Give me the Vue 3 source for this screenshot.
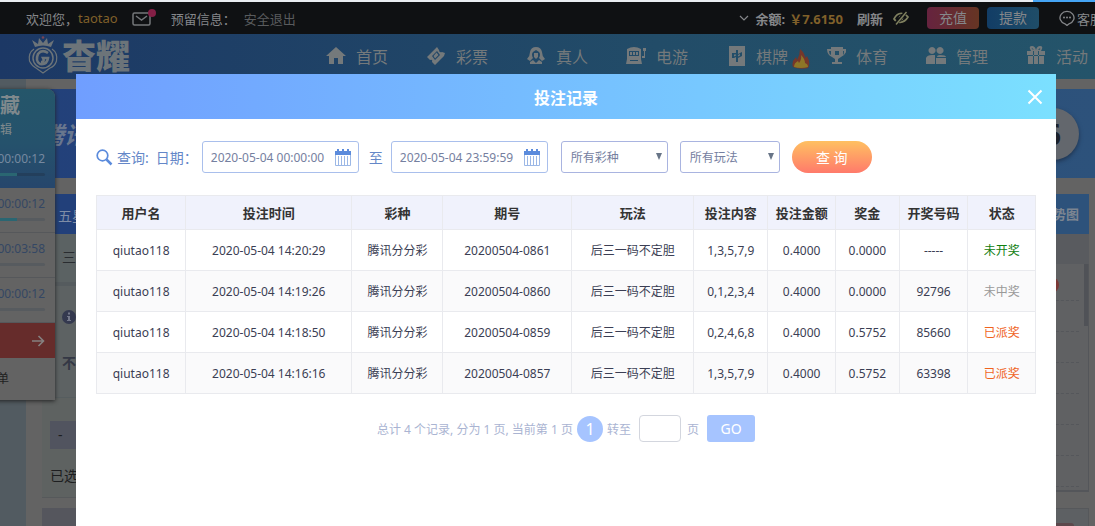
<template>
  <div class="page">
    <div class="strip"><span></span></div>

    <header class="topbar">
      <span>欢迎您，</span>
      <span class="user">taotao</span>
      <button class="mail" aria-label="mail">
        <svg width="25" height="18" viewBox="0 0 25 18">
          <rect x="1" y="4" width="17" height="12" rx="1.5" fill="none" stroke="#74777a" stroke-width="1.5" />
          <path d="M4 7l5.500 4 5.500-4" fill="none" stroke="#74777a" stroke-width="1.500" />
          <circle cx="20" cy="4" r="4" fill="#841f46" />
        </svg>
      </button>
      <span class="reserved">预留信息：</span>
      <a class="logout" href="#">安全退出</a>
      <div class="account">
        <svg width="10" height="6" viewBox="0 0 10 6"><path d="M1 1l4 4 4-4" fill="none" stroke="#85878a" stroke-width="1.2" /></svg>
        <b class="balance">余额:</b>
        <b class="money">￥7.6150</b>
        <button class="refresh">刷新</button>
        <svg class="eye" width="16" height="14" viewBox="0 0 16 14">
          <path d="M1 8Q4 2 9 2.500Q13 3 15 6Q12 11 7 11.500Q3 11 1 8Z" fill="none" stroke="#7f805f" stroke-width="1.700" />
          <circle cx="8" cy="7" r="2.400" fill="#7f805f" />
          <path d="M2.500 13L13 1" stroke="#0f1113" stroke-width="3.500" />
          <path d="M3 13.500L13.500 1" stroke="#7f805f" stroke-width="1.500" />
        </svg>
        <button class="pill pay">充值</button>
        <button class="pill draw">提款</button>
        <svg class="chat" width="16" height="16" viewBox="0 0 16 16">
          <path d="M6 13.800A7 6.300 0 1 1 10 13.800L8 15.500Z" fill="none" stroke="#85878a" stroke-width="1.300" />
          <g fill="#85878a"><circle cx="5" cy="7.500" r="1" /><circle cx="8" cy="7.500" r="1" /><circle cx="11" cy="7.500" r="1" /></g>
        </svg>
        <a class="service" href="#">客服</a>
      </div>
    </header>

    <nav class="nav">
      <div class="logo">
        <svg width="32" height="40" viewBox="0 0 32 40" fill="none" stroke="#6c7479">
          <path d="M8 11L5 4l6 4 1-6 4 5 4-5 1 6 6-4-3 7Q16 8 8 11Z" fill="#6c7479" stroke="none" />
          <circle cx="16" cy="1.500" r="1.300" fill="#7b4552" stroke="none" />
          <path d="M7 13Q1 17 2.500 25Q5 30 9 32L16 37L23 32Q28 30 29.500 25Q31 17 25 13" stroke-width="1.200" />
          <circle cx="16" cy="22" r="10" stroke-width="1.500" />
          <path d="M21 17Q15 13 11 18Q8 25 13 28Q20 29 21 22H16Q18 26 14 26" stroke-width="2.600" />
        </svg>
        <span>杳耀</span>
      </div>
      <a v-for="item in menus" :key="item.name" class="nav-item" href="#">
        <svg width="20" height="20" viewBox="0 0 20 20"><path :d="item.icon" fill="#74797b" fill-rule="evenodd" /></svg>
        <span>{{ item.name }}</span>
        <svg v-if="item.hot" class="fire" width="18" height="20" viewBox="0 0 18 20">
          <path d="M1 18Q-1 13 4 8L5 11Q8 6 8 0Q13 4 13 9L15 7Q19 14 16 19Q8 21 1 18Z" fill="#76372a" />
          <path d="M2 18Q2 14 6 12L7 14Q10 10 9 6Q13 10 13 14Q16 15 16 18Q9 20 2 18Z" fill="#8d7627" />
        </svg>
      </a>
    </nav>

    <main class="content">
      <section class="banner">
        <span class="game">腾讯</span>
        <span class="ball">6</span>
      </section>
      <div class="columns">
        <section class="play">
          <div class="tabs">五星</div>
          <div class="modes">三</div>
          <div class="info">
            <svg width="14" height="14" viewBox="0 0 14 14">
              <circle cx="7" cy="7" r="7" fill="#34394f" />
              <path d="M6 2.500h2v2H6zM5 6h3v4h1v1H5v-1h1V7H5z" fill="#74788a" />
            </svg>
            <b>不</b>
          </div>
          <div class="bet">
            <div class="minus">-</div>
            <div>已选</div>
          </div>
          <div class="next"></div>
        </section>
        <aside class="trend">
          <div class="trend-head">走势图</div>
          <div class="trend-sub"></div>
          <div class="trend-list">
            <div v-for="n in 7" :key="n" class="trend-row"><i v-if="n === 1"></i></div>
          </div>
          <div class="trend-next"><span></span></div>
        </aside>
      </div>
    </main>

    <aside class="favorite">
      <div class="fav-head">
        <b>收藏</b>
        <span>编辑</span>
      </div>
      <div v-for="(f, i) in favorites" :key="i" class="fav-item">
        <span>{{ f.time }}</span>
        <div class="progress"><div :style="{ width: f.done + '%' }"></div></div>
      </div>
      <div class="fav-go">
        <svg width="13" height="12" viewBox="0 0 13 12"><path d="M0 6h11M6.500 1L11.500 6L6.500 11" fill="none" stroke="#858080" stroke-width="1.600" /></svg>
      </div>
      <div class="fav-foot">清单</div>
    </aside>

    <div class="dialog" role="dialog" aria-labelledby="title">
      <div class="dialog-head">
        <h1 id="title">投注记录</h1>
        <button class="close" aria-label="close" type="button">
          <svg width="16" height="16" viewBox="0 0 16 16"><path d="M1.500 1.500l13 13M14.500 1.500l-13 13" stroke="#fff" stroke-width="2" /></svg>
        </button>
      </div>

      <form class="query" @submit.prevent>
        <svg class="search" width="17" height="17" viewBox="0 0 17 17">
          <circle cx="6.500" cy="6.500" r="5.300" fill="none" stroke="#5b8bdc" stroke-width="1.700" />
          <path d="M10.500 10.500L15.500 15.500" stroke="#5b8bdc" stroke-width="2.500" />
        </svg>
        <span class="query-name">查询:</span>
        <label class="label" for="start">日期：</label>
        <div class="date">
          <input id="start" v-model="start" type="text" />
          <svg width="16" height="17" viewBox="0 0 16 17"><path :d="calendarTop" fill="#5b8bdc" /><path :d="calendarGrid" fill="none" stroke="#9cb8e6" /></svg>
        </div>
        <label class="to" for="end">至</label>
        <div class="date">
          <input id="end" v-model="end" type="text" />
          <svg width="16" height="17" viewBox="0 0 16 17"><path :d="calendarTop" fill="#5b8bdc" /><path :d="calendarGrid" fill="none" stroke="#9cb8e6" /></svg>
        </div>
        <div class="select lottery">
          <select v-model="lottery" aria-label="彩种"><option>所有彩种</option></select>
        </div>
        <div class="select method">
          <select v-model="method" aria-label="玩法"><option>所有玩法</option></select>
        </div>
        <button class="submit" type="submit">查 询</button>
      </form>

      <table class="records">
        <colgroup>
          <col v-for="c in columns" :key="c.title" :style="{ width: c.width + '%' }" />
        </colgroup>
        <thead>
          <tr><th v-for="c in columns" :key="c.title">{{ c.title }}</th></tr>
        </thead>
        <tbody>
          <tr v-for="r in records" :key="r.issue">
            <td>qiutao118</td>
            <td>{{ r.time }}</td>
            <td>腾讯分分彩</td>
            <td>{{ r.issue }}</td>
            <td>后三一码不定胆</td>
            <td>{{ r.content }}</td>
            <td>0.4000</td>
            <td>{{ r.bonus }}</td>
            <td>{{ r.code }}</td>
            <td :class="r.state">{{ states[r.state] }}</td>
          </tr>
        </tbody>
      </table>

      <div class="pager">
        <span>总计 4 个记录, 分为 1 页, 当前第 1 页</span>
        <button class="current" type="button">1</button>
        <label for="page">转至</label>
        <input id="page" v-model="page" type="text" />
        <span class="unit">页</span>
        <button class="go" type="button">GO</button>
      </div>
    </div>
  </div>
</template>

<script setup>
import { ref } from 'vue'

const start = ref('2020-05-04 00:00:00')
const end = ref('2020-05-04 23:59:59')
const lottery = ref('所有彩种')
const method = ref('所有玩法')
const page = ref('')

const calendarTop = 'M0 2h2V0h2v2h3V0h2v2h3V0h2v2h2v4H0z'
const calendarGrid = 'M.5 6v10.500h15V6M3.500 7v9M6.500 7v9M9.500 7v9M12.500 7v9'

const menus = [
  { name: '首页', icon: 'M10 1L20 10H17V18H12V12H8V18H3V10H0Z' },
  { name: '彩票', icon: 'M11 1L13 4Q13 7 16 6L19 7L18 10L9 19L6 16Q7 13 4 14L1 11ZM11 5L6 10L9 14L14 9ZM10.500 6.500L12.500 9L9 12.500L7.500 10Z' },
  { name: '真人', icon: 'M10 1Q15 1 16 6Q16 10 19 13L16 15L13 12Q15 8 13 6L10 4L7 6Q5 8 7 12L4 15L1 13Q4 10 4 6Q5 1 10 1ZM8 7h4v4l-2 2-2-2ZM4 16L7 14L10 17L13 14L16 16V18H4Z' },
  { name: '电游', icon: 'M1 3Q8-1 15 3V13L16 18H0L1 13ZM3 5V10H13V5ZM4 6h2v3H4ZM7 6h2v3H7ZM10 6h2v3h-2ZM4 14V15H12V14ZM16 10h2V5h-1V2h3v3h-1v7h-3Z' },
  { name: '棋牌', hot: true, icon: 'M3 0H19V20H3ZM10 4V7H6V12H8L10 11V16H12V12L16 10V6L12 8V4ZM8 8.500H10V9.500L8 10.500ZM12 9L14 8V9.500L12 10.500Z' },
  { name: '体育', icon: 'M5 1H17V3H21Q20 9 15 11L12 13V16H16V18H6V16H9V13L6 11Q1 9 1 3H5ZM3 5Q3 8 5 9V5ZM18 5H17V9Q18 8 18 5ZM9 5v4h4V5Z' },
  { name: '管理', icon: 'M6 1a3.500 3.500 0 1 0 .1 0ZM14 1a3.500 3.500 0 1 0 .1 0ZM0 18V12Q1 9 6 9H9V18ZM10 18V12H20V18ZM11 11Q11 9 14 9Q20 9 20 11Z' },
  { name: '活动', icon: 'M1 5H5Q2 0 6 0Q9 0 10 4Q11 0 14 0Q18 0 15 5H19V9H1ZM6 2Q5 3 8 4ZM14 2L12 4Q15 4 14 2ZM2 10H18V18H2ZM7 5H8V18H7ZM12 5H13V18H12Z' }
]

const favorites = [
  { time: '00:00:12', done: 79 },
  { time: '00:00:12', done: 79 },
  { time: '00:03:58', done: 0 },
  { time: '00:00:12', done: 0 }
]

const columns = [
  { title: '用户名', width: 9.5 },
  { title: '投注时间', width: 17.7 },
  { title: '彩种', width: 9.7 },
  { title: '期号', width: 13.7 },
  { title: '玩法', width: 13 },
  { title: '投注内容', width: 7.9 },
  { title: '投注金额', width: 7.2 },
  { title: '奖金', width: 6.8 },
  { title: '开奖号码', width: 7.3 },
  { title: '状态', width: 7.2 }
]

const states = { wait: '未开奖', lose: '未中奖', win: '已派奖' }

const records = [
  { time: '2020-05-04 14:20:29', issue: '20200504-0861', content: '1,3,5,7,9', bonus: '0.0000', code: '-----', state: 'wait' },
  { time: '2020-05-04 14:19:26', issue: '20200504-0860', content: '0,1,2,3,4', bonus: '0.0000', code: '92796', state: 'lose' },
  { time: '2020-05-04 14:18:50', issue: '20200504-0859', content: '0,2,4,6,8', bonus: '0.5752', code: '85660', state: 'win' },
  { time: '2020-05-04 14:16:16', issue: '20200504-0857', content: '1,3,5,7,9', bonus: '0.5752', code: '63398', state: 'win' }
]
</script>

<style>
body {
  margin: 0;
}
</style>

<style scoped>
.page {
  position: relative;
  height: 100vh;
  overflow: hidden;
  background: #636363;
  font-family: "Noto Sans", "Noto Sans CJK SC", sans-serif;
  font-size: 13px;
  color: #85878a;
}

.page * {
  box-sizing: border-box;
}

button {
  border: none;
  padding: 0;
  background: none;
  font-family: inherit;
  font-size: inherit;
  color: inherit;
  cursor: pointer;
}

input,
select {
  font-family: inherit;
}

a {
  color: inherit;
  text-decoration: none;
}

svg {
  display: block;
  flex: none;
}

.strip {
  display: flex;
  justify-content: flex-end;
  height: 2px;
  background: #e9edf1;
}

.strip span {
  width: 62px;
  background: #45a5f5;
}

/* top bar */
.topbar {
  display: flex;
  align-items: center;
  height: 32px;
  padding-left: 26px;
  background: #0f1113;
  white-space: nowrap;
}

.user {
  color: #80602a;
}

.mail {
  margin-left: 14px;
}

.reserved {
  margin-left: 14px;
}

.logout {
  margin-left: 8px;
  color: #595b5d;
}

.account {
  display: flex;
  align-items: center;
  margin-left: auto;
  margin-right: -8px;
}

.balance {
  margin-left: 6px;
}

.money {
  margin-left: 4px;
  color: #80602a;
}

.refresh {
  margin-left: 14px;
  font-weight: bold;
}

.eye {
  margin-left: 10px;
}

.pill {
  width: 52px;
  height: 22px;
  margin-left: 8px;
  border-radius: 4px;
  font-size: 14px;
  line-height: 22px;
}

.pay {
  margin-left: 18px;
  background: linear-gradient(90deg, #66233f, #663523);
}

.draw {
  background: linear-gradient(90deg, #123d66, #1f4d68);
}

.chat {
  margin-left: 20px;
}

.service {
  margin-left: 2px;
}

/* navigation */
.nav {
  display: flex;
  align-items: center;
  height: 45px;
  padding: 0 0 2px 27px;
  background: linear-gradient(90deg, #1c3865, #224c68 60%, #24546a);
  font-size: 16px;
  color: #74797b;
}

.logo {
  display: flex;
  flex: none;
  align-items: center;
  gap: 3px;
  width: 299px;
  font-size: 34px;
  font-weight: 900;
  line-height: 40px;
  color: #6c7479;
}

.nav-item {
  display: flex;
  flex: none;
  align-items: center;
  gap: 10px;
  width: 100px;
}

.fire {
  margin-left: -6px;
  margin-right: -12px;
  margin-top: 6px;
}

/* betting page */
.content {
  padding-top: 10px;
  background: linear-gradient(90deg, #525b61 26px, #636363 26px);
}

.banner {
  display: flex;
  align-items: center;
  justify-content: space-between;
  height: 89px;
  padding: 0 16px 0 40px;
  background: linear-gradient(90deg, #22407a, #2d527b);
}

.game {
  font-size: 24px;
  font-weight: bold;
  font-style: italic;
  color: #69778e;
}

.ball {
  width: 52px;
  height: 52px;
  border-radius: 50%;
  background: #63676d;
  box-shadow: 0 2px 4px #1f3450;
  font-size: 28px;
  font-weight: bold;
  line-height: 52px;
  text-align: center;
  color: #1d222b;
}

.columns {
  display: grid;
  grid-template-columns: 1fr 240px;
  gap: 16px;
  margin: 16px 6px 0 42px;
}

.tabs {
  height: 40px;
  padding-left: 16px;
  background: #22407a;
  font-size: 14px;
  line-height: 44px;
  color: #7f8da6;
}

.modes {
  height: 52px;
  padding-left: 20px;
  border-bottom: 4px solid #555b5e;
  background: #5b6263;
  font-size: 14px;
  line-height: 46px;
  color: #292c30;
}

.info {
  display: flex;
  flex-direction: column;
  gap: 28px;
  height: 112px;
  padding: 24px 20px 0;
  border-bottom: 1px solid #565d5f;
  background: #5d6263;
  font-size: 14px;
  color: #343845;
}

.bet {
  height: 100px;
  padding: 23px 8px 0;
  border-bottom: 1px solid #56595b;
  background: #5e6261;
  font-size: 14px;
  color: #1d1e20;
}

.minus {
  height: 28px;
  margin-bottom: 16px;
  padding-left: 8px;
  background: #51545f;
  line-height: 28px;
}

.next {
  height: 60px;
  margin-top: 10px;
  background: #55565d;
}

.trend-head {
  height: 40px;
  padding-right: 10px;
  background: #2d527b;
  font-weight: bold;
  line-height: 40px;
  text-align: right;
  color: #7c8591;
}

.trend-sub {
  height: 30px;
  background: #595b5f;
}

.trend-list {
  height: 228px;
  padding: 6px 9px 0;
  border: solid #54565a;
  border-width: 0 1px 2px;
  background: linear-gradient(#505257, #505257) right top / 4px 62px no-repeat #606163;
}

.trend-row {
  display: flex;
  justify-content: flex-end;
  height: 31px;
  padding: 7px 20px 0;
  border-bottom: 1px dashed #55575b;
}

.trend-row i {
  width: 16px;
  height: 16px;
  border-radius: 50%;
  background: #7b3836;
}

.trend-next {
  height: 60px;
  margin-top: 16px;
  padding: 14px;
  border: 1px solid #56585b;
  background: #5d6063;
}

.trend-next span {
  display: block;
  height: 20px;
  border-radius: 3px;
  background: #5c484c;
}

/* favourites drawer */
.favorite {
  position: absolute;
  top: 89px;
  left: -100px;
  width: 155px;
  border-radius: 0 8px 0 0;
  background: #636363;
  box-shadow: 0 1px 4px #222;
  text-align: right;
}

.fav-head {
  display: flex;
  flex-direction: column;
  height: 54px;
  padding: 4px 35px 0 0;
  border-radius: 0 8px 0 0;
  background: linear-gradient(#25566a, #25526c);
  color: #7f898d;
}

.fav-head b {
  font-size: 20px;
  line-height: 26px;
}

.fav-head span {
  padding-right: 8px;
  font-size: 12px;
  line-height: 22px;
}

.fav-item {
  height: 45px;
  padding: 6px 10px 0;
  border-bottom: 1px solid #56585b;
  font-size: 12px;
  line-height: 20px;
  color: #344764;
}

.fav-head + .fav-item {
  border-bottom: none;
  background: linear-gradient(#25526c, #26466c);
  color: #7689a0;
}

.progress {
  height: 3px;
  margin-top: 4px;
  border-radius: 2px;
  background: #575b5f;
}

.fav-head + .fav-item .progress {
  background: #233f5c;
}

.progress div {
  height: 3px;
  background: #2a6672;
}

.fav-go {
  display: flex;
  align-items: center;
  justify-content: flex-end;
  height: 35px;
  padding-right: 10px;
  background: #662c2b;
}

.fav-foot {
  height: 42px;
  padding-right: 46px;
  font-size: 12px;
  line-height: 42px;
  color: #1f1f1f;
}

/* dialog */
.dialog {
  position: absolute;
  top: 74px;
  right: 39px;
  bottom: 0;
  left: 76px;
  background: #fff;
}

.dialog-head {
  display: flex;
  align-items: center;
  height: 45px;
  padding: 0 13px 0 29px;
  background: linear-gradient(90deg, #709eff, #7be0ff);
}

.dialog-head h1 {
  flex: 1;
  margin: 0;
  font-size: 16px;
  text-align: center;
  color: #fff;
}

.query {
  display: flex;
  align-items: center;
  height: 32px;
  margin: 22px 20px;
  font-size: 14px;
  white-space: nowrap;
  color: #6487c8;
}

.query-name {
  margin-left: 4px;
}

.label {
  margin-left: 7px;
}

.date {
  display: flex;
  align-items: center;
  width: 157px;
  height: 32px;
  margin-left: 4px;
  padding: 0 7px 0 8px;
  border: 1px solid #a9bfec;
  border-radius: 3px;
}

.date input {
  flex: 1;
  min-width: 0;
  padding: 0;
  border: none;
  outline: none;
  background: none;
  font-size: 12px;
  color: #7580a0;
}

.to {
  margin: 0 4px 0 10px;
}

.select {
  position: relative;
  height: 32px;
  margin-left: 13px;
}

.select::after {
  content: '';
  position: absolute;
  top: 12px;
  right: 6px;
  border: solid transparent;
  border-width: 7px 3px 0;
  border-top-color: #687587;
  pointer-events: none;
}

.select select {
  width: 100%;
  height: 32px;
  padding: 0 9px;
  border: 1px solid #a9b4e0;
  border-radius: 3px;
  background: #fff;
  appearance: none;
  font-size: 12px;
  color: #7580a0;
}

.lottery {
  width: 107px;
}

.method {
  width: 100px;
  margin-left: 12px;
}

.submit {
  width: 80px;
  height: 32px;
  margin-left: 12px;
  border-radius: 16px;
  background: linear-gradient(#ffc061, #ff7a6b);
  font-size: 14px;
  color: #fff;
}

.records {
  width: calc(100% - 40px);
  margin: 0 20px;
  border-collapse: collapse;
  table-layout: fixed;
  font-size: 12px;
  text-align: center;
  white-space: nowrap;
  color: #3b3e54;
}

.records th,
.records td {
  height: 41px;
  padding: 0;
  border: 1px solid #e9eaee;
}

.records th {
  height: 34px;
  background: #f0f2fc;
  font-size: 13px;
  color: #333;
}

.records tr:nth-child(even) td {
  background: #fafafb;
}

.records .wait {
  color: #118011;
}

.records .lose {
  color: #999;
}

.records .win {
  color: #f0641e;
}

.pager {
  display: flex;
  align-items: center;
  justify-content: center;
  margin-top: 21px;
  font-size: 12px;
  color: #aab4d2;
}

.current {
  width: 26px;
  height: 26px;
  margin: 0 4px;
  border-radius: 50%;
  background: #a6c4ff;
  font-size: 16px;
  line-height: 26px;
  color: #fff;
}

.pager input {
  width: 42px;
  height: 27px;
  margin: 0 6px 0 8px;
  border: 1px solid #d3d6de;
  border-radius: 4px;
}

.go {
  width: 48px;
  height: 27px;
  margin-left: 8px;
  border-radius: 3px;
  background: #a6c4ff;
  font-size: 14px;
  color: #fff;
}
</style>
